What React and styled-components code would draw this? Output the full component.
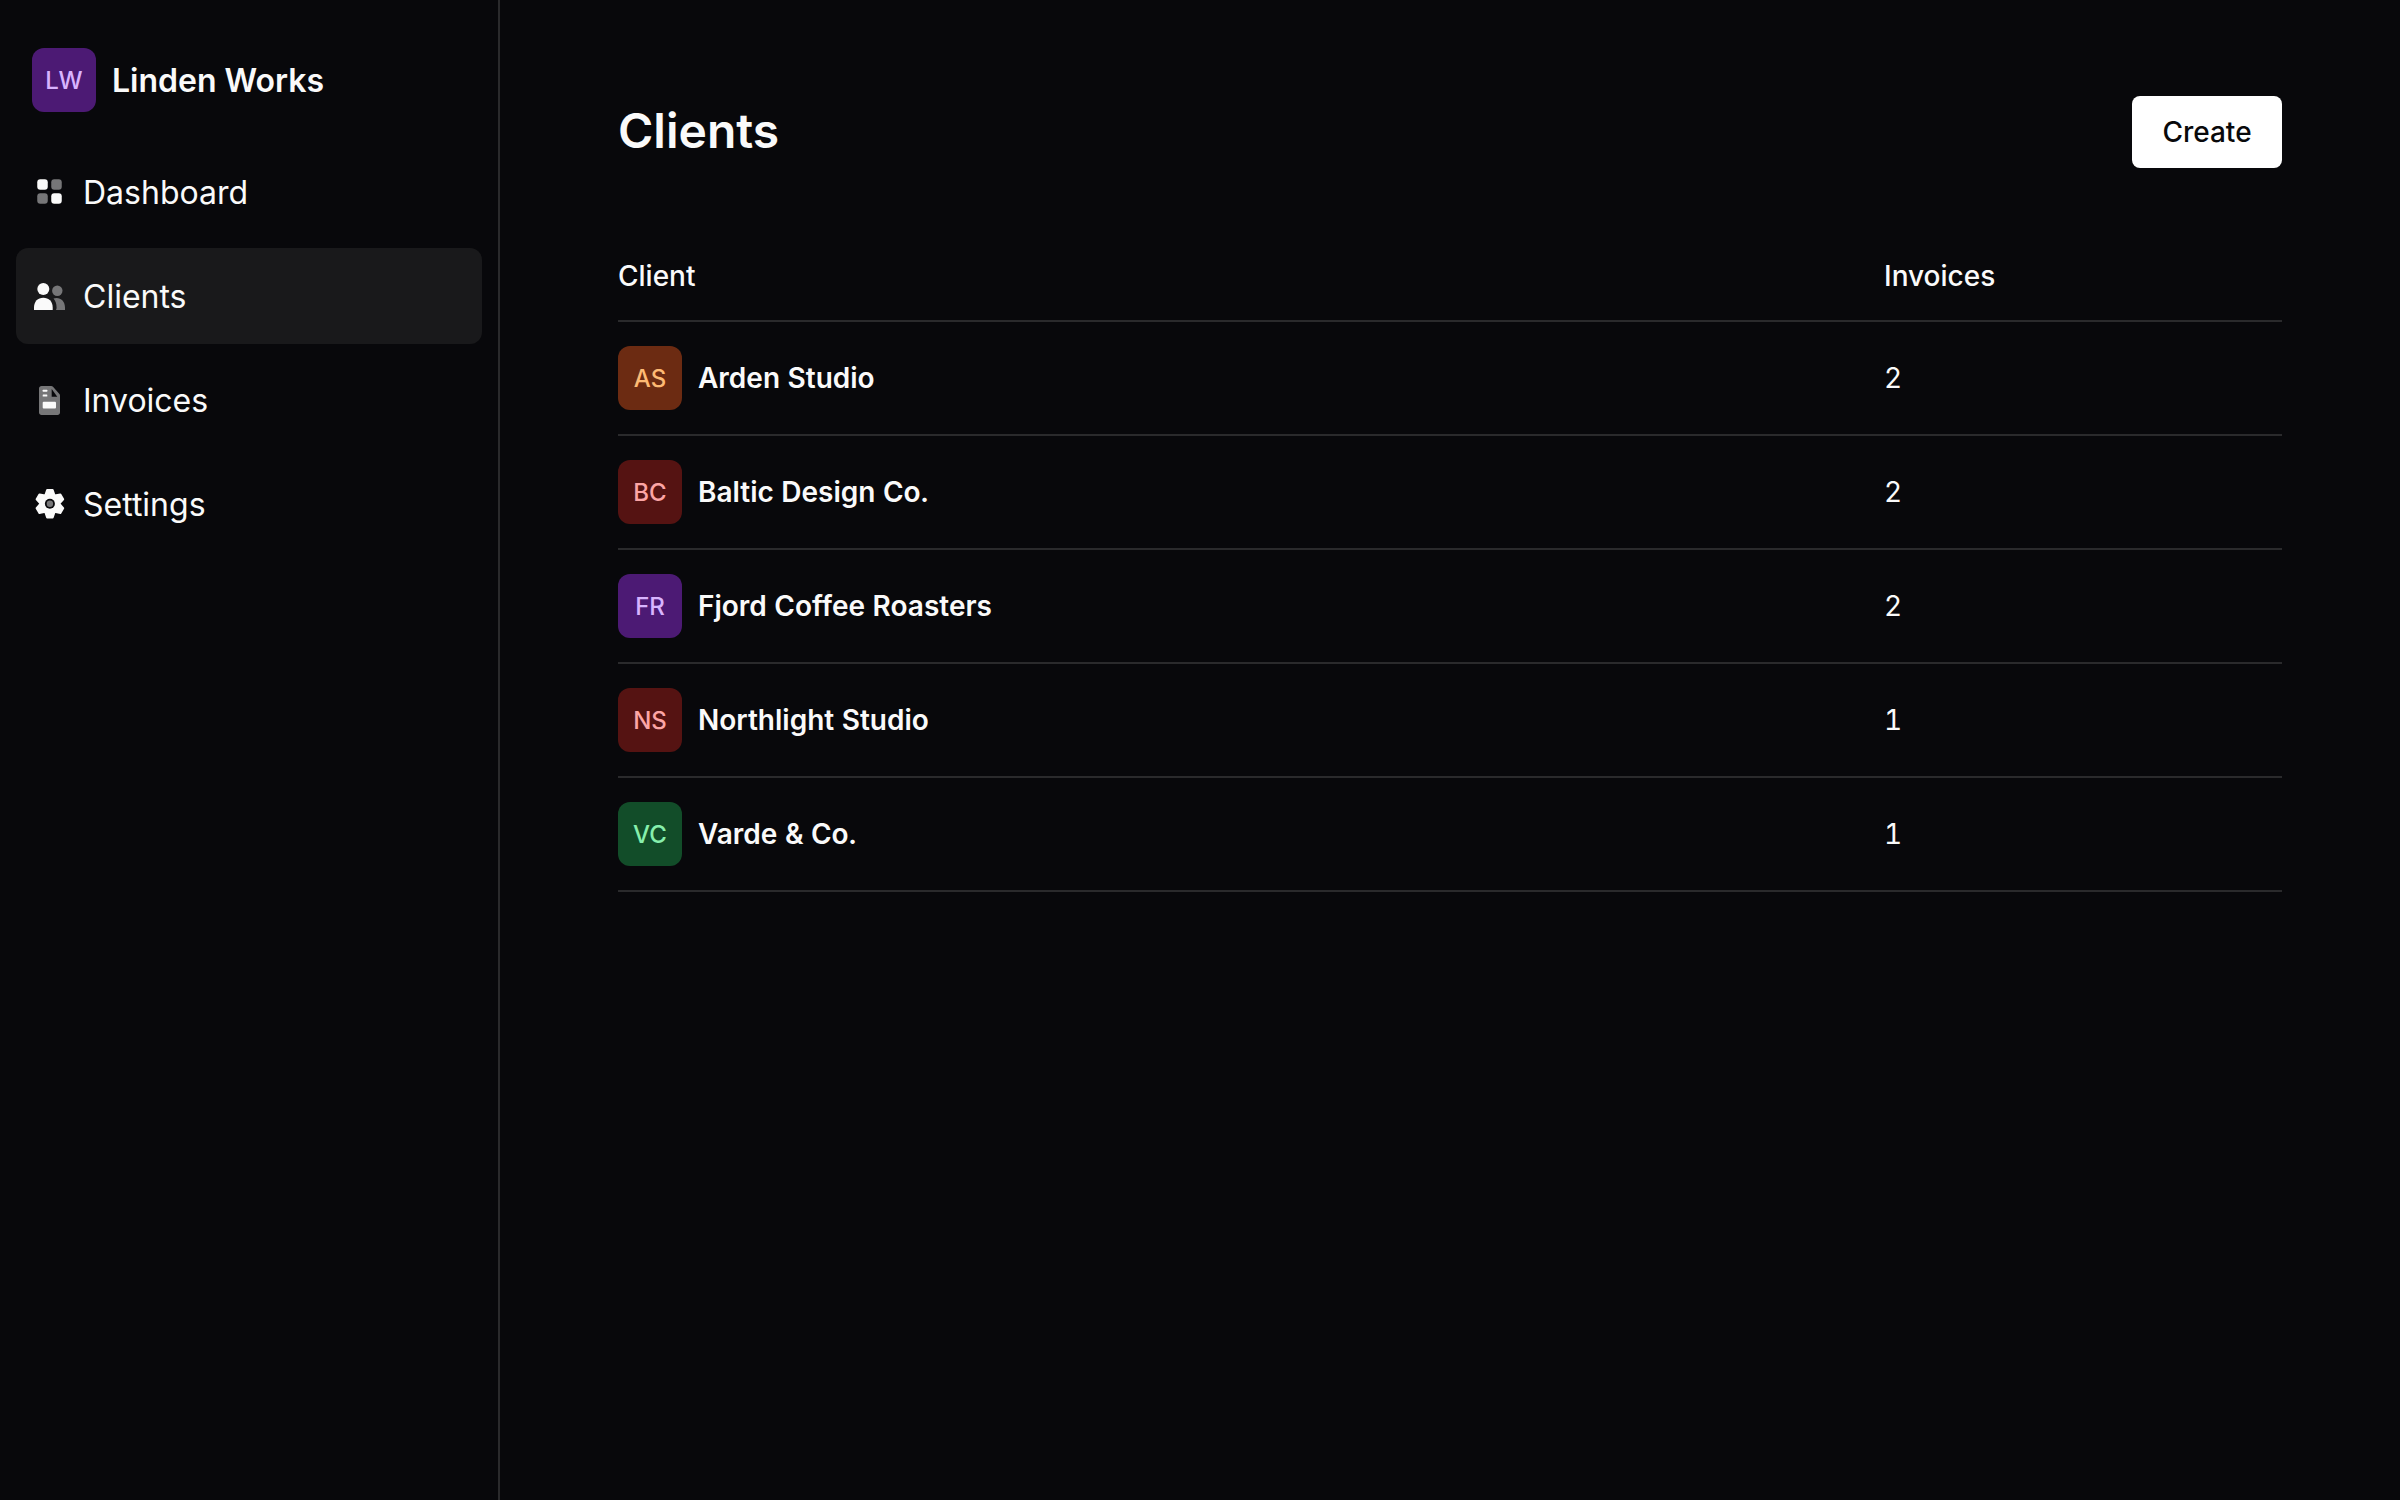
import React from 'react';
import styled, { createGlobalStyle } from 'styled-components';

const GlobalStyle = createGlobalStyle`
  html, body {
    margin: 0;
    height: 100%;
    background: #08080b;
    color: #fafafa;
    font-family: Inter, "Liberation Sans", sans-serif;
  }
  #root { height: 100%; }
  * { box-sizing: border-box; }
`;

const Shell = styled.div`
  display: flex;
  min-height: 1500px;
`;

const Sidebar = styled.aside`
  flex: 0 0 500px;
  padding: 48px 16px 0;
  border-right: 2px solid #2a2a2c;
`;

const Brand = styled.div`
  display: flex;
  align-items: center;
  gap: 16px;
  padding-left: 16px;
  margin-bottom: 32px;
`;

const BrandName = styled.span`
  font-size: 32px;
  font-weight: 600;
`;

const Avatar = styled.span`
  flex: none;
  display: flex;
  align-items: center;
  justify-content: center;
  width: 64px;
  height: 64px;
  border-radius: 12px;
  font-size: 24px;
  font-weight: 500;
  background: ${({ $bg }) => $bg};
  color: ${({ $fg }) => $fg};
`;

const Nav = styled.nav`
  display: flex;
  flex-direction: column;
  gap: 8px;
`;

const NavItem = styled.a`
  display: flex;
  align-items: center;
  gap: 15px;
  height: 96px;
  width: 466px;
  padding-left: 16px;
  border-radius: 12px;
  font-size: 32px;
  background: ${({ $active }) => ($active ? '#19191b' : 'transparent')};
`;

const Main = styled.main`
  flex: 1;
  padding: 96px 118px 0;
`;

const Header = styled.header`
  display: flex;
  align-items: center;
  justify-content: space-between;
  margin-bottom: 64px;
`;

const Title = styled.h1`
  margin: 0 0 4px;
  font-size: 48px;
  font-weight: 600;
`;

const CreateButton = styled.button`
  width: 150px;
  height: 72px;
  border: 0;
  border-radius: 8px;
  background: #fff;
  color: #09090b;
  font-family: inherit;
  font-size: 28px;
  font-weight: 500;
`;

const Row = styled.div`
  display: grid;
  grid-template-columns: 1266px 1fr;
  align-items: center;
  border-bottom: 2px solid #2a2a2c;
`;

const HeadRow = styled(Row)`
  height: 90px;
  font-size: 28px;
  font-weight: 500;
`;

const ClientRow = styled(Row)`
  height: 114px;
  font-size: 28px;
  font-variant-numeric: tabular-nums;
`;

const ClientCell = styled.div`
  display: flex;
  align-items: center;
  gap: 16px;
`;

const ClientName = styled.span`
  font-size: 28px;
  font-weight: 600;
`;

const Icon = styled.svg`
  flex: none;
  width: 36px;
  height: 36px;
`;

const GREY = '#767678';

function gearPath() {
  const points = [];
  for (let i = 0; i < 6; i++) {
    const a = (i * Math.PI) / 3 - Math.PI / 2;
    const at = (r, off) => {
      const x = 17.9 + r * Math.cos(a + off);
      const y = 17.7 + r * Math.sin(a + off);
      return `${x.toFixed(2)} ${y.toFixed(2)}`;
    };
    points.push(at(9.4, -0.52), at(14, -0.2), at(14, 0.2), at(9.4, 0.52));
  }
  return `M${points.join('L')}Z`;
}

const DashboardIcon = () => (
  <Icon viewBox="0 0 36 36">
    <rect x="5.25" y="5.25" width="10.5" height="10.5" rx="3" fill="#fafafa" />
    <rect x="19.25" y="5.25" width="10.5" height="10.5" rx="3" fill={GREY} />
    <rect x="5.25" y="19.25" width="10.5" height="10.5" rx="3" fill={GREY} />
    <rect x="19.25" y="19.25" width="10.5" height="10.5" rx="3" fill="#fafafa" />
  </Icon>
);

const ClientsIcon = () => (
  <Icon viewBox="0 0 36 36">
    <circle cx="25.3" cy="12.7" r="5.2" fill={GREY} />
    <path d="M21.5 20.6c1-.4 2-.6 3-.6 4.800 0 8.500 3.600 8.500 9.600V32h-9c.4-.8.6-1.600.6-2.400 0-3.800-1.300-7-3.100-9z" fill={GREY} />
    <circle cx="11.3" cy="11" r="6" fill="#fafafa" />
    <path d="M2 32V29.500C2 23.500 5.800 19.800 11.300 19.800s9.400 3.700 9.400 9.700V32z" fill="#fafafa" />
  </Icon>
);

const InvoicesIcon = () => (
  <Icon viewBox="0 0 36 36">
    <path d="M9.500 4h9.700c.7 0 1.300.3 1.800.8l6.200 7c.5.5.8 1.100.8 1.800v17c0 1.300-1.100 2.400-2.400 2.400H9.500c-1.300 0-2.500-1.100-2.500-2.400V6.400C7 5.100 8.200 4 9.500 4z" fill={GREY} />
    <path d="M19.700 7l5.600 7.700h-5.600z" fill="#08080b" />
    <rect x="10.700" y="7.700" width="4.600" height="2" rx=".5" fill="#fafafa" />
    <rect x="10.700" y="12.400" width="4.600" height="2.200" rx=".5" fill="#fafafa" />
    <rect x="10.700" y="19.700" width="13.300" height="6.800" rx="1" fill="#fafafa" />
  </Icon>
);

const SettingsIcon = () => (
  <Icon viewBox="0 0 36 36">
    <path d={gearPath()} fill="#fafafa" stroke="#fafafa" strokeWidth="2" strokeLinejoin="round" />
    <circle cx="17.900" cy="17.700" r="5" fill="#08080b" />
    <circle cx="17.900" cy="17.700" r="3.200" fill={GREY} />
  </Icon>
);

const clients = [
  { initials: 'AS', name: 'Arden Studio', invoices: 2, bg: '#6c2b12', fg: '#fdba74' },
  { initials: 'BC', name: 'Baltic Design Co.', invoices: 2, bg: '#551312', fg: '#fca5a5' },
  { initials: 'FR', name: 'Fjord Coffee Roasters', invoices: 2, bg: '#4c1a74', fg: '#d8b4fe' },
  { initials: 'NS', name: 'Northlight Studio', invoices: 1, bg: '#551312', fg: '#fca5a5' },
  { initials: 'VC', name: 'Varde & Co.', invoices: 1, bg: '#124d29', fg: '#86efac' },
];

export default function App() {
  return (
    <>
      <GlobalStyle />
      <Shell>
        <Sidebar>
          <Brand>
            <Avatar $bg="#4c1a74" $fg="#d8b4fe">LW</Avatar>
            <BrandName>Linden Works</BrandName>
          </Brand>
          <Nav>
            <NavItem><DashboardIcon />Dashboard</NavItem>
            <NavItem $active><ClientsIcon />Clients</NavItem>
            <NavItem><InvoicesIcon />Invoices</NavItem>
            <NavItem><SettingsIcon />Settings</NavItem>
          </Nav>
        </Sidebar>
        <Main>
          <Header>
            <Title>Clients</Title>
            <CreateButton>Create</CreateButton>
          </Header>
          <HeadRow>
            <div>Client</div>
            <div>Invoices</div>
          </HeadRow>
          {clients.map((client) => (
            <ClientRow key={client.name}>
              <ClientCell>
                <Avatar $bg={client.bg} $fg={client.fg}>{client.initials}</Avatar>
                <ClientName>{client.name}</ClientName>
              </ClientCell>
              <div>{client.invoices}</div>
            </ClientRow>
          ))}
        </Main>
      </Shell>
    </>
  );
}
